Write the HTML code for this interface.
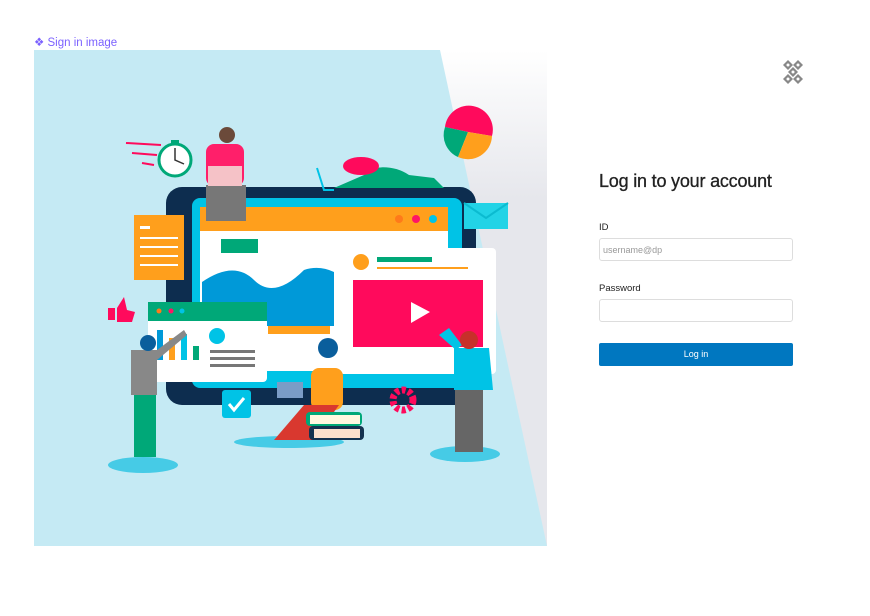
<!DOCTYPE html>
<html><head><style>
body{margin:0;width:870px;height:616px;background:#fff;font-family:"Liberation Sans",sans-serif;position:relative;overflow:hidden}
.lbl{position:absolute;left:34px;top:35px;font-size:11.5px;color:#7b61ff}
.title{position:absolute;left:599px;top:171px;font-size:18px;color:#222;letter-spacing:-0.2px;-webkit-text-stroke:0.3px #222}
.f{position:absolute;left:599px;font-size:9.5px;color:#222}
.in{position:absolute;left:599px;height:23px;border:1px solid #ddd;border-radius:3px;background:#fff;font-size:9px;color:#999;line-height:22px;padding-left:3px;box-sizing:border-box;width:194px}
.btn{position:absolute;left:599px;top:343px;width:194px;height:23px;background:#0077c0;border-radius:2px;color:#fff;font-size:9px;text-align:center;line-height:23px}
</style></head><body>
<div class="lbl">❖ Sign in image</div>
<svg style="position:absolute;left:34px;top:50px" width="513" height="496" viewBox="0 0 513 496">
<defs><linearGradient id="g" x1="0" y1="0" x2="0" y2="1"><stop offset="0" stop-color="#fff"/><stop offset="0.3" stop-color="#e6e7ec"/><stop offset="1" stop-color="#e6e7ec"/></linearGradient></defs>
<rect x="0" y="0" width="513" height="496" fill="url(#g)"/>
<polygon points="0,0 406,0 513,496 0,496" fill="#c5eaf4"/>
<rect x="132" y="137" width="310" height="218" rx="16" fill="#0d2d4f"/>
<rect x="158" y="148" width="270" height="190" rx="8" fill="#00c3e6"/>
<rect x="166" y="157" width="248" height="24" fill="#ff9f1c"/>
<circle cx="365" cy="169" r="4" fill="#ff7a1a"/><circle cx="382" cy="169" r="4" fill="#ff1466"/><circle cx="399" cy="169" r="4" fill="#00c3e6"/>
<rect x="166" y="181" width="248" height="140" fill="#fff"/>
<rect x="187" y="189" width="37" height="14" fill="#00a878"/>
<path d="M168 232 Q200 210 220 230 T270 220 Q285 215 300 222 L300 276 L168 276Z" fill="#0099d8"/>
<rect x="234" y="276" width="62" height="8" fill="#ff9f1c"/>
<rect x="305" y="198" width="157" height="126" rx="4" fill="#fff"/>
<circle cx="327" cy="212" r="8" fill="#ff9f1c"/>
<rect x="343" y="207" width="55" height="5" fill="#00a878"/><rect x="343" y="217" width="91" height="2" fill="#ff9f1c"/>
<rect x="319" y="230" width="130" height="67" fill="#ff0a5c"/>
<polygon points="377,252 377,273 396,262" fill="#fff"/>
<rect x="100" y="165" width="50" height="65" fill="#ff9f1c"/>
<g fill="#fff"><rect x="106" y="176" width="10" height="3"/><rect x="106" y="187" width="38" height="2"/><rect x="106" y="196" width="38" height="2"/><rect x="106" y="205" width="38" height="2"/><rect x="106" y="214" width="38" height="2"/></g>
<rect x="114" y="252" width="119" height="80" rx="4" fill="#fff"/>
<rect x="114" y="252" width="119" height="19" fill="#00a878"/>
<circle cx="125" cy="261" r="2.5" fill="#ff7a1a"/><circle cx="137" cy="261" r="2.5" fill="#ff1466"/><circle cx="148" cy="261" r="2.5" fill="#00c3e6"/>
<rect x="123" y="280" width="6" height="30" fill="#0099d8"/><rect x="135" y="288" width="6" height="22" fill="#ff9f1c"/><rect x="147" y="284" width="6" height="26" fill="#00c3e6"/><rect x="159" y="296" width="6" height="14" fill="#00a878"/>
<circle cx="183" cy="286" r="8" fill="#00c3e6"/>
<rect x="176" y="300" width="45" height="3" fill="#777"/><rect x="176" y="307" width="45" height="3" fill="#777"/><rect x="176" y="314" width="45" height="3" fill="#777"/>
<rect x="430" y="153" width="44" height="26" fill="#22d3e6"/><path d="M430 153 L452 168 L474 153" fill="none" stroke="#0bbbd0" stroke-width="2"/>
<path d="M411 77 A24 24 0 1 1 458 86 L434 82Z" fill="#ff0a5c"/><path d="M411 77 L434 82 L424 107 A24 24 0 0 1 411 77Z" fill="#00a878"/><path d="M434 82 L458 86 A24 24 0 0 1 424 107Z" fill="#ff9f1c"/>
<circle cx="141" cy="110" r="16" fill="#fff" stroke="#00a878" stroke-width="3"/><rect x="137" y="90" width="8" height="4" fill="#00a878"/>
<path d="M141 98 L141 110 L150 114" stroke="#333" stroke-width="1.5" fill="none"/>
<path d="M92 93 L127 95 M98 103 L123 105 M108 113 L120 115" stroke="#ff0a5c" stroke-width="2"/>
<rect x="74" y="258" width="7" height="12" fill="#ff0a5c"/><path d="M83 258 L90 247 L93 260 L101 262 L98 272 L83 272Z" fill="#ff0a5c"/>
<rect x="188" y="340" width="29" height="28" rx="3" fill="#00c3e6"/><path d="M195 354 L200 360 L210 348" stroke="#fff" stroke-width="3" fill="none"/>
<circle cx="369" cy="350" r="10" fill="none" stroke="#ff0a5c" stroke-width="7" stroke-dasharray="4 2.5"/>
<ellipse cx="109" cy="415" rx="35" ry="8" fill="#46cbe6"/><ellipse cx="255" cy="392" rx="55" ry="6" fill="#46cbe6"/><ellipse cx="431" cy="404" rx="35" ry="8" fill="#46cbe6"/>
<path d="M97 300 L123 300 L150 280 L153 285 L123 310 L123 345 L97 345Z" fill="#888"/><rect x="100" y="345" width="22" height="62" fill="#00a878"/><circle cx="114" cy="293" r="8" fill="#0a5e9c"/>
<rect x="172" y="94" width="38" height="42" rx="8" fill="#ff1f6a"/><rect x="172" y="135" width="40" height="36" fill="#777"/><circle cx="193" cy="85" r="8" fill="#6b4a3a"/><rect x="174" y="116" width="34" height="20" fill="#f5c2c7"/>
<path d="M300 138 L330 125 L340 118 Q360 115 375 125 L400 128 L410 138Z" fill="#00a878"/><ellipse cx="327" cy="116" rx="18" ry="9" fill="#ff0a5c"/><path d="M283 118 L290 140 L300 140" stroke="#00c3e6" stroke-width="2" fill="none"/>
<rect x="277" y="318" width="32" height="42" rx="8" fill="#ff9f1c"/><circle cx="294" cy="298" r="10" fill="#0a5e9c"/><path d="M240 390 L270 355 L305 355 L280 390Z" fill="#d9382f"/><rect x="243" y="332" width="26" height="16" fill="#7a9cc6"/>
<rect x="272" y="362" width="56" height="14" rx="4" fill="#00a878"/><rect x="276" y="365" width="50" height="9" fill="#fff8e0"/><rect x="275" y="376" width="55" height="14" rx="4" fill="#15324f"/><rect x="280" y="379" width="46" height="9" fill="#fde0cc"/>
<path d="M420 298 L455 298 L459 340 L420 340Z" fill="#00c3e6"/><path d="M422 300 L405 285 L415 278 L428 295Z" fill="#00c3e6"/><rect x="421" y="340" width="28" height="62" fill="#666"/><circle cx="435" cy="290" r="9" fill="#c7302a"/>
</svg>
<svg style="position:absolute;left:780px;top:59px" width="26" height="26" viewBox="0 0 26 26"><g fill="#888"><path d="M8 1 L13 6 L8 11 L3 6Z"/><path d="M18 1 L23 6 L18 11 L13 6Z"/><path d="M8 15 L13 20 L8 25 L3 20Z"/><path d="M18 15 L23 20 L18 25 L13 20Z"/><path d="M13 8 L18 13 L13 18 L8 13Z"/></g><g fill="#fff"><circle cx="8" cy="6" r="1.5"/><circle cx="18" cy="6" r="1.5"/><circle cx="8" cy="20" r="1.5"/><circle cx="18" cy="20" r="1.5"/><circle cx="13" cy="13" r="1.5"/></g></svg>
<div class="title">Log in to your account</div>
<div class="f" style="top:222px">ID</div>
<div class="in" style="top:238px">username@dp</div>
<div class="f" style="top:283px">Password</div>
<div class="in" style="top:299px"></div>
<div class="btn">Log in</div>
</body></html>
